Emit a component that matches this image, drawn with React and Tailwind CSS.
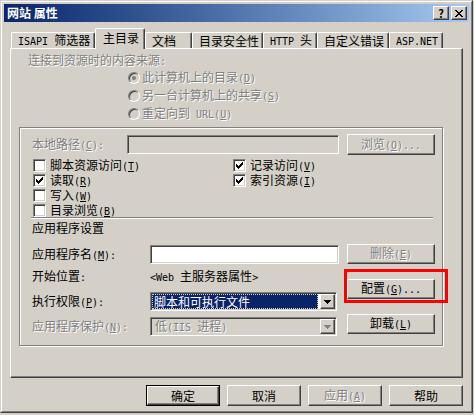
import React from 'react';

const raised =
  'border border-t-white border-l-white border-r-[#404040] border-b-[#404040] shadow-[inset_-1px_-1px_0_#808080]';
const sunken =
  'border border-t-[#808080] border-l-[#808080] border-r-white border-b-white shadow-[inset_1px_1px_0_#404040,inset_-1px_-1px_0_#d4d0c8]';
const dim = 'text-[#808080] [text-shadow:1px_1px_0_#fff]';

// latin runs: half-width like the bitmap font in the dialog
const L = ({ children }) => (
  <span className="font-['DejaVu_Sans_Mono',monospace] text-[10px]">{children}</span>
);

const Key = ({ text, k, tail = '' }) => (
  <>
    {text}
    <L>
      (<u>{k}</u>){tail}
    </L>
  </>
);

const Button = ({ children, disabled, className = '' }) => (
  <div className={`flex items-center justify-center bg-[#d4d0c8] ${raised} ${disabled ? dim : 'text-black'} ${className}`}>
    <span>{children}</span>
  </div>
);

const Check = ({ checked }) => (
  <span className={`w-[13px] h-[13px] shrink-0 bg-white ${sunken} flex items-center justify-center`}>
    {checked && (
      <svg width="11" height="11" viewBox="0 0 11 11" shapeRendering="crispEdges">
        <path
          fill="#000"
          d="M2 4h1v3H2z M3 5h1v3H3z M4 6h1v3H4z M5 5h1v3H5z M6 4h1v3H6z M7 3h1v3H7z M8 2h1v3H8z"
        />
      </svg>
    )}
  </span>
);

const CheckRow = ({ checked, text, k, h = 'h-[15px]' }) => (
  <div className={`${h} flex items-center gap-[4px] leading-[13px]`}>
    <Check checked={checked} />
    <span>
      <Key text={text} k={k} />
    </span>
  </div>
);

const Radio = ({ on, text }) => (
  <div className="h-[18px] flex items-center gap-[2px] leading-[16px]">
    <span className="w-[12px] h-[12px] rounded-full border border-t-[#808080] border-l-[#808080] border-r-white border-b-white shadow-[inset_1px_1px_0_#404040] flex items-center justify-center">
      {on && <span className="w-[4px] h-[4px] rounded-full bg-[#808080]" />}
    </span>
    <span className={dim}>{text}</span>
  </div>
);

const Arrow = ({ color = '#000' }) => (
  <svg width="7" height="4" viewBox="0 0 7 4" shapeRendering="crispEdges">
    <path fill={color} d="M0 0h7v1H0z M1 1h5v1H1z M2 2h3v1H2z M3 3h1v1H3z" />
  </svg>
);

const Tab = ({ children, w, active }) =>
  active ? (
    <div
      className={`${w} h-[21px] -mb-px relative z-10 bg-[#d4d0c8] border-l border-t border-r border-l-white border-t-white border-r-[#404040] shadow-[inset_-1px_0_0_#808080] rounded-t-[2px] flex items-center pl-[7px] pb-[2px]`}
    >
      <span>{children}</span>
    </div>
  ) : (
    <div
      className={`${w} h-[16px] bg-[#d4d0c8] border-l border-t border-r border-l-white border-t-white border-r-[#404040] shadow-[inset_-1px_0_0_#808080] rounded-t-[2px] flex items-center pl-[6px]`}
    >
      <span>{children}</span>
    </div>
  );

export default function App() {
  return (
    <div className="w-[474px] h-[415px] bg-[#d4d0c8] font-['Noto_Sans_CJK_SC',sans-serif] text-[12px] leading-[12px] text-black">
      <div className="w-[473px] h-[413px] border border-t-[#d4d0c8] border-l-[#d4d0c8] border-r-[#404040] border-b-[#404040]">
        <div className="w-full h-full border border-t-white border-l-white border-r-[#808080] border-b-[#808080] p-[2px] flex flex-col">
          {/* title bar */}
          <div className="h-[18px] shrink-0 flex items-center bg-linear-to-r from-[#0a246a] to-[#a6caf0] pl-[3px] pr-[2px]">
            <span className="text-white font-bold">网站 属性</span>
            <div className="ml-auto flex gap-[2px]">
              <div className={`w-[16px] h-[14px] bg-[#d4d0c8] ${raised} flex items-center justify-center font-bold text-[11px] leading-[11px]`}>
                ?
              </div>
              <div className={`w-[16px] h-[14px] bg-[#d4d0c8] ${raised} flex items-center justify-center`}>
                <svg width="8" height="7" viewBox="0 0 8 7" shapeRendering="crispEdges">
                  <path
                    fill="#000"
                    d="M0 0h2v1H0z M6 0h2v1H6z M1 1h2v1H1z M5 1h2v1H5z M2 2h4v1H2z M3 3h2v1H3z M2 4h4v1H2z M1 5h2v1H1z M5 5h2v1H5z M0 6h2v1H0z M6 6h2v1H6z"
                  />
                </svg>
              </div>
            </div>
          </div>

          {/* tabs */}
          <div className="mt-[6px] h-[20px] ml-[7px] flex items-end">
            <Tab w="w-[84px]">
              <L>ISAPI </L>筛选器
            </Tab>
            <Tab w="w-[50px]" active>
              主目录
            </Tab>
            <Tab w="w-[47px]">文档</Tab>
            <Tab w="w-[71px]">目录安全性</Tab>
            <Tab w="w-[54px]">
              <L>HTTP </L>头
            </Tab>
            <Tab w="w-[72px]">自定义错误</Tab>
            <Tab w="w-[54px]">
              <L>ASP.NET</L>
            </Tab>
          </div>

          {/* tab page */}
          <div className={`ml-[6px] w-[453px] h-[330px] shrink-0 ${raised} flex flex-col`}>
            <div className={`pl-[17px] pt-[5px] ${dim}`}>
              连接到资源时的内容来源<L>:</L>
            </div>
            <div className="mt-[1px] ml-[117px] flex flex-col">
              <Radio on text={<Key text="此计算机上的目录" k="D" />} />
              <Radio text={<Key text="另一台计算机上的共享" k="S" />} />
              <Radio
                text={
                  <>
                    重定向到<L> URL</L>
                    <L>
                      (<u>U</u>)
                    </L>
                  </>
                }
              />
            </div>

            {/* group box */}
            <div className="mt-[4px] ml-[8px] w-[424px] h-[219px] border border-[#808080] shadow-[inset_1px_1px_0_#fff,1px_1px_0_#fff] flex flex-col">
              <div className="mt-[6px] h-[21px] pl-[12px] flex items-center">
                <span className={`w-[95px] ${dim}`}>
                  <Key text="本地路径" k="C" tail=":" />
                </span>
                <div className={`w-[212px] h-[19px] bg-[#d4d0c8] ${sunken}`} />
                <Button disabled className="ml-[8px] w-[88px] h-[21px]">
                  <Key text="浏览" k="O" tail="..." />
                </Button>
              </div>

              <div className="mt-[3px] pl-[13px] grid grid-cols-[200px_1fr]">
                <CheckRow text="脚本资源访问" k="T" />
                <CheckRow checked text="记录访问" k="V" />
                <CheckRow checked text="读取" k="R" />
                <CheckRow checked text="索引资源" k="I" />
                <CheckRow text="写入" k="W" />
                <div />
                <CheckRow text="目录浏览" k="B" h="h-[14px]" />
                <div />
              </div>

              <div className="ml-[11px] w-[402px] h-[2px] border-t border-t-[#808080] border-b border-b-white" />

              <div className="mt-[3px] pl-[12px]">应用程序设置</div>

              <div className="pl-[12px] flex">
                <div className="w-[307px] flex flex-col">
                  <div className="mt-[11px] h-[19px] flex items-center">
                    <span className="w-[118px]">
                      <Key text="应用程序名" k="M" tail=":" />
                    </span>
                    <div className={`w-[189px] h-[19px] bg-white ${sunken}`} />
                  </div>
                  <div className="mt-[7px] h-[12px] flex items-center">
                    <span className="w-[118px]">
                      开始位置<L>:</L>
                    </span>
                    <span>
                      <L>&lt;Web </L>主服务器属性<L>&gt;</L>
                    </span>
                  </div>
                  <div className="mt-[9px] h-[19px] flex items-center">
                    <span className="w-[118px]">
                      <Key text="执行权限" k="P" tail=":" />
                    </span>
                    <div className={`w-[187px] h-[19px] bg-white ${sunken} p-[1px] flex`}>
                      <div className="flex-1 mr-[2px] bg-[#0a246a] text-white flex items-center pl-[2px] outline-1 outline-dotted outline-[#d4d0c8] -outline-offset-1">
                        脚本和可执行文件
                      </div>
                      <div className={`w-[15px] h-full bg-[#d4d0c8] ${raised} flex items-center justify-center`}>
                        <Arrow />
                      </div>
                    </div>
                  </div>
                  <div className="mt-[6px] h-[19px] flex items-center">
                    <span className={`w-[118px] ${dim}`}>
                      <Key text="应用程序保护" k="N" tail=":" />
                    </span>
                    <div className={`w-[187px] h-[19px] bg-[#d4d0c8] ${sunken} p-[1px] flex`}>
                      <div className={`flex-1 flex items-center pl-[3px] ${dim}`}>
                        <span>
                          低<L>(IIS </L>进程<L>)</L>
                        </span>
                      </div>
                      <div className={`w-[15px] h-full bg-[#d4d0c8] ${raised} flex items-center justify-center`}>
                        <Arrow color="#808080" />
                      </div>
                    </div>
                  </div>
                </div>

                <div className="ml-[8px] w-[88px] flex flex-col">
                  <Button disabled className="mt-[10px] h-[20px]">
                    <Key text="删除" k="E" />
                  </Button>
                  <div className="mt-[15px] relative">
                    <Button className="h-[20px]">
                      <Key text="配置" k="G" tail="..." />
                    </Button>
                    <span className="absolute left-[-3px] top-[-10px] w-[104px] h-[34px] border-[3px] border-[#ff0000]" />
                  </div>
                  <Button className="mt-[15px] h-[20px]">
                    <Key text="卸载" k="L" />
                  </Button>
                </div>
              </div>
            </div>
          </div>

          {/* dialog buttons */}
          <div className="mt-[7px] pr-[6px] flex justify-end gap-[7px]">
            <div className="w-[74px] h-[21px] border border-black">
              <Button className="w-full h-full">确定</Button>
            </div>
            <Button className="w-[74px] h-[21px]">取消</Button>
            <Button disabled className="w-[74px] h-[21px]">
              <Key text="应用" k="A" />
            </Button>
            <Button className="w-[74px] h-[21px]">帮助</Button>
          </div>
        </div>
      </div>
    </div>
  );
}
